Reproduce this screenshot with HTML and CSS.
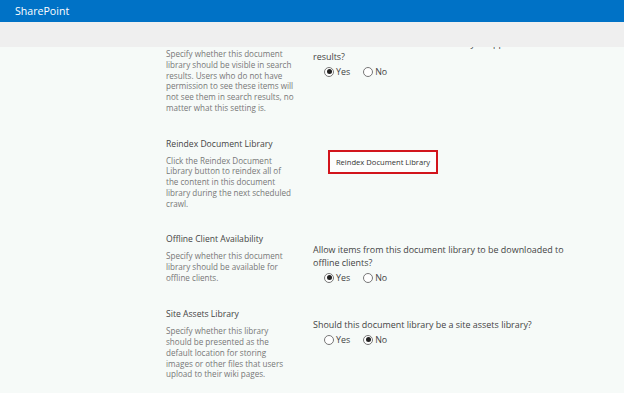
FILE: index.html
```html
<!DOCTYPE html>
<html lang="en">
<head>
<meta charset="utf-8">
<title>Document Library Advanced Settings</title>
<link rel="stylesheet" href="styles.css">
</head>
<body>
<header class="topbar"><span class="brand">SharePoint</span></header>
<div class="ribbon"></div>
<main class="viewport">
  <div class="settings">
    <section class="setting">
      <div class="info">
        <h3 class="title">Search</h3>
        <p class="desc">Specify whether this document<br>library should be visible in search<br>results. Users who do not have<br>permission to see these items will<br>not see them in search results, no<br>matter what this setting is.</p>
      </div>
      <div class="control control-first">
        <p class="question">Allow items from this document library to appear in search<br>results?</p>
        <div class="options">
          <span class="option"><span class="radio on"></span>Yes</span>
          <span class="option"><span class="radio"></span>No</span>
        </div>
      </div>
    </section>
    <section class="setting">
      <div class="info">
        <h3 class="title">Reindex Document Library</h3>
        <p class="desc">Click the Reindex Document<br>Library button to reindex all of<br>the content in this document<br>library during the next scheduled<br>crawl.</p>
      </div>
      <div class="control">
        <button class="reindex" type="button">Reindex Document Library</button>
      </div>
    </section>
    <section class="setting">
      <div class="info">
        <h3 class="title">Offline Client Availability</h3>
        <p class="desc">Specify whether this document<br>library should be available for<br>offline clients.</p>
      </div>
      <div class="control">
        <p class="question">Allow items from this document library to be downloaded to<br>offline clients?</p>
        <div class="options">
          <span class="option"><span class="radio on"></span>Yes</span>
          <span class="option"><span class="radio"></span>No</span>
        </div>
      </div>
    </section>
    <section class="setting">
      <div class="info">
        <h3 class="title">Site Assets Library</h3>
        <p class="desc">Specify whether this library<br>should be presented as the<br>default location for storing<br>images or other files that users<br>upload to their wiki pages.</p>
      </div>
      <div class="control">
        <p class="question">Should this document library be a site assets library?</p>
        <div class="options">
          <span class="option"><span class="radio"></span>Yes</span>
          <span class="option"><span class="radio on"></span>No</span>
        </div>
      </div>
    </section>
  </div>
</main>
</body>
</html>
```
FILE: styles.css
```css
* { box-sizing: border-box; }
html, body { margin: 0; padding: 0; }
body {
  width: 624px;
  height: 393px;
  overflow: hidden;
  background: #f6faf8;
  font-family: "Open Sans", "Noto Sans", sans-serif;
  color: #444;
  display: flex;
  flex-direction: column;
}
.topbar {
  height: 22px;
  flex: none;
  background: #0072c6;
  display: flex;
  align-items: center;
  padding-left: 15px;
}
.brand {
  color: #fff;
  font-size: 10.6px;
  line-height: 1;
}
.ribbon {
  height: 25px;
  flex: none;
  background: #efefef;
}
.viewport {
  flex: 1;
  overflow: hidden;
}
.settings {
  margin-top: -28px;
  padding-left: 166px;
}
.setting {
  display: grid;
  grid-template-columns: 147px 1fr;
  padding: 12px 0 12px;
}
.title {
  margin: 0 0 5px;
  font-size: 8.6px;
  line-height: 13px;
  font-weight: normal;
  color: #444;
  white-space: nowrap;
}
.desc {
  margin: 0;
  font-size: 8.1px;
  line-height: 10.75px;
  color: #777;
  white-space: nowrap;
}
.control {
  padding-top: 10px;
}
.control-first {
  padding-top: 6px;
}
.question {
  margin: 0;
  font-size: 8.95px;
  line-height: 13px;
  color: #444;
  white-space: nowrap;
}
.options {
  margin-top: 2px;
  height: 13px;
  padding-left: 11px;
  display: flex;
  align-items: center;
  font-size: 8.9px;
  color: #444;
}
.option {
  display: flex;
  align-items: center;
  gap: 2px;
  margin-right: 13px;
}
.radio {
  width: 10px;
  height: 10px;
  border-radius: 50%;
  border: 1px solid #777;
  background: #fff;
  display: flex;
  align-items: center;
  justify-content: center;
}
.radio.on::after {
  content: "";
  width: 5px;
  height: 5px;
  border-radius: 50%;
  background: #222;
}
.reindex {
  margin: -0.5px 0 0 15px;
  width: 110px;
  height: 24px;
  padding: 0;
  border: 2px solid #d2141c;
  background: #fdfdfd;
  font-family: inherit;
  font-size: 7.6px;
  color: #333;
  cursor: pointer;
}
```
